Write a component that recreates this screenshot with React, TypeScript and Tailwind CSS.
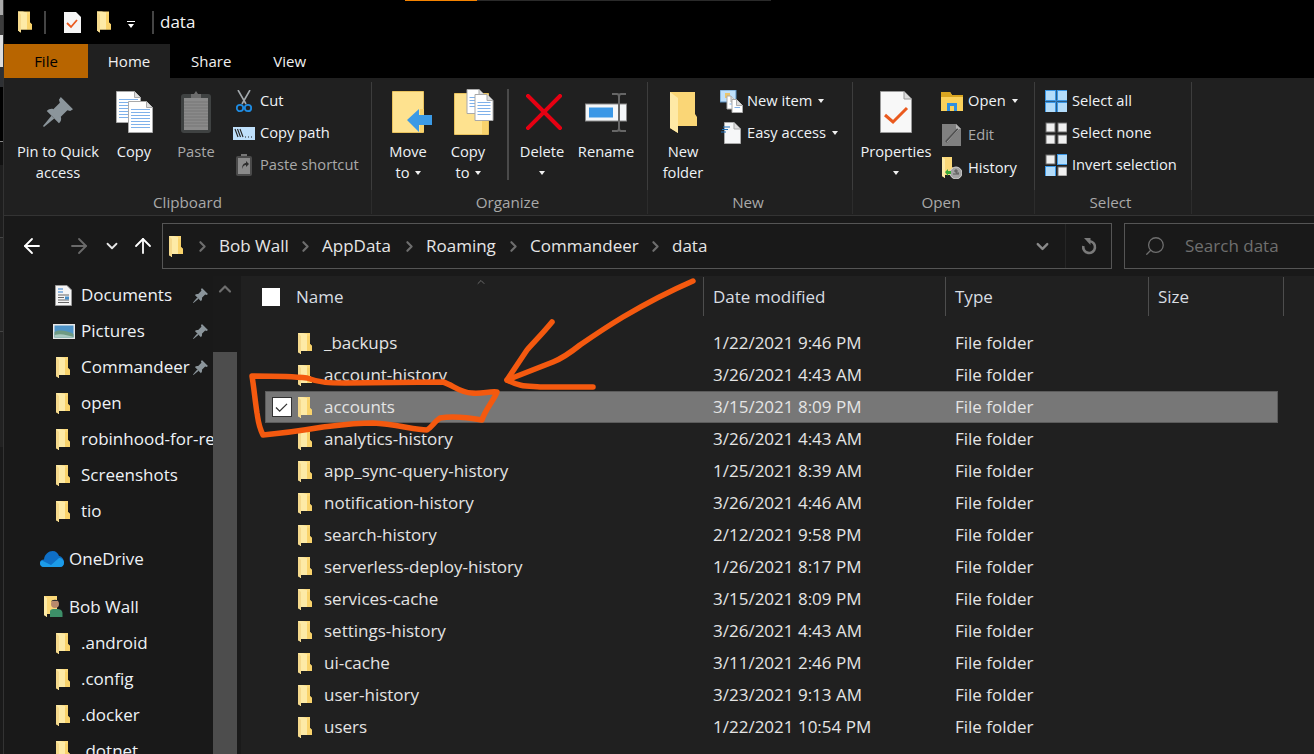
import React from 'react';
import { ArrowLeft, ArrowRight, ArrowUp, ChevronDown, ChevronRight, ChevronUp, Search } from 'lucide-react';

const FILES = [
  ['_backups', '1/22/2021 9:46 PM'],
  ['account-history', '3/26/2021 4:43 AM'],
  ['accounts', '3/15/2021 8:09 PM'],
  ['analytics-history', '3/26/2021 4:43 AM'],
  ['app_sync-query-history', '1/25/2021 8:39 AM'],
  ['notification-history', '3/26/2021 4:46 AM'],
  ['search-history', '2/12/2021 9:58 PM'],
  ['serverless-deploy-history', '1/26/2021 8:17 PM'],
  ['services-cache', '3/15/2021 8:09 PM'],
  ['settings-history', '3/26/2021 4:43 AM'],
  ['ui-cache', '3/11/2021 2:46 PM'],
  ['user-history', '3/23/2021 9:13 AM'],
  ['users', '1/22/2021 10:54 PM'],
];

const Folder = ({ className = 'w-[14px] h-[21px]' }: { className?: string }) => (
  <svg viewBox="0 0 14 21" className={`${className} shrink-0`}>
    <path d="M0 0H12V11L14 13V18H3V21L0 19Z" fill="#fbd878" />
    <path d="M0 0H4.5L9 1V18H3V21L0 19Z" fill="#fdeaa6" />
    <path d="M3 3V21L0 19V0Z" fill="#f5d98c" />
    <path d="M9 3H12V11L14 13V18H9Z" fill="#f9d36b" />
  </svg>
);

const Pin = ({ className = 'w-[15px] h-[15px]' }: { className?: string }) => (
  <svg viewBox="0 0 32 32" className={className} fill="#8b959b">
    <path d="M19 0L32 13L29 15L26 14L19 21C20 24 19 26 17 28L4 15C6 13 9 12 11 13L18 6L17 3Z" />
    <path d="M9 20L12 23L1 32L0 31Z" />
  </svg>
);

const DocLines = ({ x, y, w, h }: { x: number; y: number; w: number; h: number }) => (
  <g>
    <path d={`M${x} ${y}H${x + w - 6}L${x + w} ${y + 6}V${y + h}H${x}Z`} fill="#fff" stroke="#a9a9a9" />
    <path d={`M${x + w - 6} ${y}V${y + 6}H${x + w}`} fill="#ddd" stroke="#a9a9a9" />
    {Array.from({ length: Math.floor((h - 10) / 3) }).map((_, i) => (
      <path key={i} d={`M${x + 2.5} ${y + 8 + i * 3}H${x + w - 2.5}`} stroke="#7fb1ea" />
    ))}
  </g>
);

const CopyIcon = () => (
  <svg viewBox="0 0 37 42" className="w-[37px] h-[42px]">
    <DocLines x={0.5} y={0.5} w={24} h={31} />
    <DocLines x={12.5} y={10.5} w={24} h={31} />
  </svg>
);

const PasteIcon = () => (
  <svg viewBox="0 0 30 42" className="w-[30px] h-[42px]">
    <rect x="0" y="3" width="30" height="39" rx="3" fill="#3f4242" />
    <rect x="3" y="7" width="24" height="32" fill="#8a8a8a" />
    {[11, 14, 17, 20, 23, 26, 29, 32, 35].map(y => <path key={y} d={`M3 ${y}H27`} stroke="#777" />)}
    <path d="M10 7V3H13L15 0L17 3H20V7Z" fill="#6c6c6c" />
  </svg>
);

const CutIcon = () => (
  <svg viewBox="0 0 16 23" className="w-[16px] h-[23px]" fill="none">
    <path d="M2 0L10 14M14 0L6 14" stroke="#a3a9ad" strokeWidth="1.6" />
    <circle cx="4" cy="18" r="3.2" stroke="#1f8be0" strokeWidth="1.8" />
    <circle cx="12" cy="18" r="3.2" stroke="#1f8be0" strokeWidth="1.8" />
  </svg>
);

const CopyPathIcon = () => (
  <svg viewBox="0 0 22 13" className="w-[22px] h-[13px]">
    <rect width="22" height="13" fill="#bfe0fb" />
    <path d="M2 2L5 10M4.5 2L7.5 10M7 2L10 10" stroke="#222" strokeWidth="1.1" />
    <path d="M12 10h1M15 10h1M18 10h1" stroke="#222" strokeWidth="1.2" />
  </svg>
);

const PasteShortcutIcon = () => (
  <svg viewBox="0 0 16 22" className="w-[16px] h-[22px]">
    <rect y="2" width="16" height="20" rx="2" fill="#4a4a4a" />
    <rect x="2" y="4" width="12" height="16" fill="#8a8a8a" />
    <path d="M5 2V0H11V2Z" fill="#777" />
    <path d="M6 15C6 11 8 9 10 9V7L13 10L10 13V11C8 11 7 12 6 15Z" fill="#2d2d2d" />
  </svg>
);

const MoveIcon = () => (
  <svg viewBox="0 0 40 42" className="w-[40px] h-[42px] ml-[7px]">
    <path d="M0.5 0.5H31.5V41.5H0.5Z" fill="#fee28f" stroke="#e8c25e" />
    <path d="M28 18H32V41H28Z" fill="#f8d26c" />
    <path d="M15 32L27 21V27H40V37H27V44Z" fill="#3b9ae6" transform="translate(0 -3)" />
  </svg>
);

const CopyToIcon = () => (
  <svg viewBox="0 0 40 46" className="w-[40px] h-[46px] ml-[12px]">
    <path d="M0.5 4.5H34.5V45.5H0.5Z" fill="#fee28f" stroke="#e8c25e" />
    <path d="M28 30H34V45H28Z" fill="#f8d26c" />
    <DocLines x={13} y={0.5} w={18} h={24} />
    <DocLines x={21} y={5.5} w={18} h={26} />
  </svg>
);

const DeleteIcon = () => (
  <svg viewBox="0 0 36 36" className="w-[36px] h-[36px] ml-[3px]">
    <path d="M2 2L34 34M34 2L2 34" stroke="#e60012" strokeWidth="4" strokeLinecap="square" />
  </svg>
);

const RenameIcon = () => (
  <svg viewBox="0 0 42 39" className="w-[42px] h-[39px]">
    <rect x="0.5" y="11" width="41" height="17" fill="#f4f6f8" stroke="#8a8a8a" />
    <rect x="4" y="14.5" width="24" height="10" fill="#3a97e6" />
    <path d="M33 1H28M33 1C34.5 1 35 2 35 4V35C35 37 34.5 38 33 38H28M37 1H42M37 1C35.5 1 35 2 35 4M37 38C35.5 38 35 37 35 35M37 38H42" stroke="#666" strokeWidth="2" fill="none" transform="translate(-1 0)" />
  </svg>
);

const NewFolderIcon = () => (
  <svg viewBox="0 0 27 41" className="w-[27px] h-[41px]">
    <path d="M0 0H25V22L27 25V34H8V41L0 36Z" fill="#fad676" />
    <path d="M0 0L8 6V41L0 36Z" fill="#fee9a6" />
  </svg>
);

const NewItemIcon = () => (
  <svg viewBox="0 0 23 23" className="w-[23px] h-[23px]">
    <rect width="16" height="12" fill="#bfe0fb" stroke="#5a8fc0" />
    <path d="M5 3h5v5h-5z" fill="#e9c56e" />
    <DocLines x={7} y={6} w={10} h={13} />
    <DocLines x={12} y={9.5} w={10.5} h={13} />
  </svg>
);

const EasyAccessIcon = () => (
  <svg viewBox="0 0 20 22" className="w-[20px] h-[22px]">
    <path d="M3.5 0.5H13L19.5 7V21.5H3.5Z" fill="#f6f7f8" stroke="#a9a9a9" />
    <path d="M13 0.5V7H19.5" fill="#ddd" stroke="#a9a9a9" />
    <path d="M2 5h7M1 7.5h6M0 10h5" stroke="#1e6fb8" strokeWidth="1.2" />
  </svg>
);

const PropertiesIcon = () => (
  <svg viewBox="0 0 32 42" className="w-[32px] h-[42px]">
    <path d="M0.5 0.5H24L31.5 8V41.5H0.5Z" fill="#f8f8f8" stroke="#9a9a9a" />
    <path d="M24 0.5V8H31.5" fill="#ddd" stroke="#9a9a9a" />
    <path d="M5 24L13 31L27 17" fill="none" stroke="#ea5a1e" strokeWidth="3" />
  </svg>
);

const OpenIcon = () => (
  <svg viewBox="0 0 22 19" className="w-[22px] h-[19px]">
    <path d="M0 0H9L11 3H22V19H0Z" fill="#fbd15b" />
    <path d="M0 0H9L11 3H22V5H0Z" fill="#d9a521" />
    <path d="M6 19V11H16V19H13V14H9V19Z" fill="#2f8fe0" />
  </svg>
);

const EditIcon = () => (
  <svg viewBox="0 0 20 22" className="w-[20px] h-[22px]">
    <path d="M0 0H14L19 5V22H0Z" fill="#808080" />
    <path d="M14 0V5H19Z" fill="#b5b5b5" />
    <path d="M4 18L16 5" stroke="#4f4f4f" strokeWidth="2.4" />
    <path d="M5 18L17 5" stroke="#b0b0b0" strokeWidth="0.8" />
  </svg>
);

const HistoryIcon = () => (
  <svg viewBox="0 0 20 22" className="w-[20px] h-[22px]">
    <path d="M0 0H10V10L13 12V18H3V21L0 19Z" fill="#fbd878" />
    <path d="M0 0L3 2V21L0 19Z" fill="#fdeaa6" />
    <circle cx="14" cy="16" r="6" fill="#a3a3a3" stroke="#d5d5d5" />
    <path d="M14 12V16H17M12 14h4M11 17h6" stroke="#444" strokeWidth="0.8" fill="none" />
    <path d="M3 15L6 12V14H9V17H6V19Z" fill="#3aa93a" />
  </svg>
);

const GridIcon = ({ cells }: { cells: ('b' | 'w')[] }) => (
  <svg viewBox="0 0 22 22" className="w-[22px] h-[22px]">
    {cells.map((c, i) => {
      const x = i % 2 === 0 ? 0 : 12;
      const y = i < 2 ? 0 : 12;
      return c === 'b' ? (
        <rect key={i} x={x + 0.5} y={y + 0.5} width="10" height="10" fill="#b3dcfa" stroke="#3a97e6" />
      ) : (
        <rect key={i} x={x + 1} y={y + 1} width="9" height="9" fill="#f0f0f0" stroke="#6e6e6e" />
      );
    })}
    {cells.every(c => c === 'b') && <path d="M10.5 0H11.5V22H10.5ZM0 10.5H22V11.5H0Z" fill="#3a97e6" />}
  </svg>
);

const RefreshIcon = () => (
  <svg viewBox="0 0 16 17" className="w-[16px] h-[17px]" fill="none">
    <path d="M9 3.2A5.9 5.9 0 1 1 2.3 8" stroke="#7a7a7a" strokeWidth="2.6" />
    <path d="M3 0H9.500V7Z" fill="#7a7a7a" />
  </svg>
);

const Caret = ({ className = '' }: { className?: string }) => (
  <span className={`inline-block w-0 h-0 border-x-[3.5px] border-x-transparent border-t-[4px] border-t-[#f0f0f0] align-middle ${className}`} />
);

const Large = ({ w, icon, lines, caret, dim }: { w: string; icon: React.ReactNode; lines: string[]; caret?: boolean; dim?: boolean }) => (
  <div className={`${w} flex flex-col items-center shrink-0 leading-[21px] ${dim ? 'text-[#a9a9a9]' : 'text-[#eef2f6]'}`}>
    <div className="h-[60px] -mb-[1px] flex items-center justify-center">{icon}</div>
    <div className="whitespace-nowrap">{lines[0]}</div>
    <div className="h-[21px] flex items-center justify-center gap-[5px] whitespace-nowrap">
      {lines[1]}
      {caret && <Caret />}
    </div>
  </div>
);

const Small = ({ icon, label, caret, dim, h = 'h-[32px]' }: { icon: React.ReactNode; label: string; caret?: boolean; dim?: boolean; h?: string }) => (
  <div className={`${h} flex items-center whitespace-nowrap ${dim ? 'text-[#a9a9a9]' : 'text-[#eef2f6]'}`}>
    <div className="w-[24px] mr-[4px] flex justify-center">{icon}</div>
    <span className="-mt-[2px]">{label}</span>
    {caret && <Caret className="ml-[6px]" />}
  </div>
);

const Group = ({ w, label, labelPad = '', className = '', children }: { w: string; label: string; labelPad?: string; className?: string; children: React.ReactNode }) => (
  <div className={`${w} shrink-0 flex flex-col`}>
    <div className={`mt-[4px] h-[108px] flex border-r border-[#3d3d3d] ${className}`}>{children}</div>
    <div className={`h-[24px] flex items-center justify-center border-r border-[#2c2c2c] text-[#a9a9a9] text-[15.2px] ${labelPad}`}>{label}</div>
  </div>
);

const Crumb = ({ label, w }: { label: string; w: string }) => (
  <div className={`${w} shrink-0 flex items-center text-[#e6e6e6]`}>
    <ChevronRight className="w-[17px] h-[17px] text-[#6e6e6e] mr-[8px] shrink-0" strokeWidth={3} />
    {label}
  </div>
);

const NavRow = ({ icon, label, indent = 'pl-[52px]', iconW = 'w-[25px]', pinned, className = '' }: { icon?: React.ReactNode; label: string; indent?: string; iconW?: string; pinned?: boolean; className?: string }) => (
  <div className={`h-[36px] flex items-center shrink-0 relative overflow-hidden whitespace-nowrap text-[#eef2f6] ${indent} ${className}`}>
    <div className={`${iconW} shrink-0 flex`}>{icon ?? <Folder />}</div>
    <span>{label}</span>
    {pinned && (
      <div className="absolute right-0 top-0 h-full w-[20px] flex items-center">
        <Pin />
      </div>
    )}
  </div>
);

const Cloud = () => (
  <svg viewBox="0 0 24 16" className="w-[24px] h-[16px]">
    <path d="M4 16C1 16 0 14 0 12C0 10 1.5 8.5 4 8.5C4.5 3 9 0 12.5 0C16 0 18 2 19 5C22 5.5 24 8.5 24 11.5C24 14.5 22 16 20 16Z" fill="#0f6fc6" />
    <path d="M4 16C1 16 0 14 0 12C0 11 1 10 2 9.5L11 14L19 7C21.5 7 24 9 24 11.5C24 14.5 22 16 20 16Z" fill="#1c9be8" />
  </svg>
);

const UserFolder = () => (
  <svg viewBox="0 0 19 22" className="w-[19px] h-[22px]">
    <path d="M0 0H13V18H3V21L0 19Z" fill="#fbd878" />
    <path d="M0 0L3 2V21L0 19Z" fill="#fdeaa6" />
    <circle cx="11" cy="8" r="4" fill="#b88a6c" />
    <path d="M7 6C7 3 15 3 15 6L14 5H8Z" fill="#333" />
    <path d="M6 21V16C6 13 8 13 11 13C15 13 18 13 18.5 17V21Z" fill="#3d8f68" />
  </svg>
);

const Annotation = () => (
  <svg className="absolute left-0 top-0 w-[1314px] h-[754px] pointer-events-none" viewBox="0 0 1314 754" fill="none" stroke="#f4590f" strokeWidth="5.5" strokeLinecap="round" strokeLinejoin="round">
    <path d="M693 281C670 291 645 304 623 317C608 326 596 334 580 345C570 353 563 358 553 362L507 380" />
    <path d="M552 322C543 333 535 341 527 350L507 380C520 387 527 386 540 387L593 387" />
    <path d="M252 376C270 376 290 376 307 378C320 383 330 383 345 383L443 382C453 385 460 393 472 393C482 394 490 391 497 392C494 400 485 410 482 420C465 417 452 416 440 418C434 422 432 427 427 430C415 430 395 424 373 423C355 423 340 425 323 427C305 430 285 433 263 435C258 425 258 418 257 413C255 400 254 388 252 376Z" />
  </svg>
);

const App = () => (
  <div className="w-[1314px] h-[754px] overflow-hidden relative flex bg-[#191919] text-[17px] leading-[22px] font-['Open_Sans',sans-serif]">
    {/* bit of the window behind */}
    <div className="w-[4px] shrink-0 flex flex-col border-r border-[#333]">
      <div className="h-[15px] bg-[#aaaaaa]" />
      <div className="h-[20px] bg-[#3c3c3c]" />
      <div className="h-[32px] bg-[#dddddd]" />
      <div className="h-[20px] bg-[#2e3033]" />
      <div className="h-[55px] bg-black border-b border-[#888]" />
      <div className="h-[23px] bg-[#111]" />
      <div className="h-[73px] bg-[#1e1e1e] border-b border-[#444]" />
      <div className="h-[94px] bg-[#262626] border-b border-[#444]" />
      <div className="h-[115px] bg-[#222]" />
      <div className="flex-1 bg-[#1a1a1a]" />
    </div>

    <div className="flex-1 min-w-0 flex flex-col">
      {/* title bar */}
      <div className="h-[44px] shrink-0 bg-black relative flex items-center text-white">
        <div className="absolute left-[401px] top-0 h-[1px] w-[72px] bg-[#f58300]" />
        <div className="absolute left-[473px] top-0 h-[1px] w-[294px] bg-[#2a2a2a]" />
        <div className="ml-[14px]"><Folder className="w-[14px] h-[22px]" /></div>
        <div className="ml-[12px] w-[2px] h-[23px] bg-[#444]" />
        <div className="ml-[18px]">
          <svg viewBox="0 0 17 21" className="w-[17px] h-[21px]">
            <path d="M0 0H12L17 5V21H0Z" fill="#f5f5f5" />
            <path d="M3 11L7 15L13 8" fill="none" stroke="#ea5a1e" strokeWidth="1.8" />
          </svg>
        </div>
        <div className="ml-[16px]"><Folder className="w-[14px] h-[22px]" /></div>
        <div className="ml-[16px] flex flex-col items-center gap-[2px] mt-[5px]">
          <div className="w-[8px] h-[1px] bg-white" />
          <Caret className="!border-t-white" />
        </div>
        <div className="ml-[17px] w-[2px] h-[23px] bg-[#444]" />
        <div className="ml-[6px] text-[#f4f4f4]">data</div>
      </div>

      {/* tabs */}
      <div className="h-[34px] shrink-0 bg-black flex items-center text-[#f0f0f0] text-[15px]">
        <div className="w-[84px] h-full bg-[#b86500] text-black flex items-center justify-center">File</div>
        <div className="w-[82px] h-full bg-[#202020] flex items-center justify-center">Home</div>
        <div className="ml-[21px]">Share</div>
        <div className="ml-[42px]">View</div>
      </div>

      {/* ribbon */}
      <div className="h-[138px] shrink-0 bg-[#202020] flex border-b border-[#333] text-[14.7px]">
        <Group w="w-[368px]" label="Clipboard" className="pl-[8px]">
          <Large w="w-[92px]" icon={<Pin className="w-[30px] h-[30px]" />} lines={['Pin to Quick', 'access']} />
          <Large w="w-[60px]" icon={<CopyIcon />} lines={['Copy']} />
          <Large w="w-[64px]" icon={<PasteIcon />} lines={['Paste']} dim />
          <div className="ml-[4px] pt-[3px]">
            <Small icon={<CutIcon />} label="Cut" />
            <Small icon={<CopyPathIcon />} label="Copy path" />
            <Small icon={<PasteShortcutIcon />} label="Paste shortcut" dim />
          </div>
        </Group>
        <Group w="w-[276px]" label="Organize" labelPad="pr-[4px]" className="pl-[6px]">
          <Large w="w-[60px]" icon={<MoveIcon />} lines={['Move', 'to']} caret />
          <Large w="w-[60px]" icon={<CopyToIcon />} lines={['Copy', 'to']} caret />
          <div className="ml-[9px] mr-[3px] mt-[7px] w-[2px] h-[91px] bg-[#4a4a4a]" />
          <Large w="w-[60px]" icon={<DeleteIcon />} lines={['Delete', '']} caret />
          <Large w="w-[68px]" icon={<RenameIcon />} lines={['Rename']} />
        </Group>
        <Group w="w-[205px]" label="New" labelPad="pr-[4px]" className="pl-[5px]">
          <Large w="w-[60px]" icon={<NewFolderIcon />} lines={['New', 'folder']} />
          <div className="ml-[6px] pt-[3px]">
            <Small icon={<NewItemIcon />} label="New item" caret />
            <Small icon={<EasyAccessIcon />} label="Easy access" caret />
          </div>
        </Group>
        <Group w="w-[182px]" label="Open" labelPad="pr-[5px]" className="pl-[5px]">
          <Large w="w-[76px]" icon={<PropertiesIcon />} lines={['Properties', '']} caret />
          <div className="ml-[6px] pt-[3px]">
            <Small icon={<OpenIcon />} label="Open" caret />
            <Small h="h-[36px]" icon={<EditIcon />} label="Edit" dim />
            <Small h="h-[30px]" icon={<HistoryIcon />} label="History" />
          </div>
        </Group>
        <Group w="w-[157px]" label="Select" labelPad="pr-[5px]" className="pl-[9px]">
          <div className="pt-[3px]">
            <Small icon={<GridIcon cells={['b', 'b', 'b', 'b']} />} label="Select all" />
            <Small icon={<GridIcon cells={['w', 'w', 'w', 'w']} />} label="Select none" />
            <Small icon={<GridIcon cells={['w', 'b', 'b', 'w']} />} label="Invert selection" />
          </div>
        </Group>
      </div>

      {/* address row */}
      <div className="h-[60px] shrink-0 flex items-center bg-[#191919]">
        <ArrowLeft className="w-[24px] h-[24px] ml-[16px] text-white" strokeWidth={1.8} />
        <ArrowRight className="w-[24px] h-[24px] ml-[23px] text-[#6a6a6a]" strokeWidth={1.8} />
        <ChevronDown className="w-[18px] h-[18px] ml-[12px] text-[#e6e6e6]" strokeWidth={2.4} />
        <ArrowUp className="w-[24px] h-[24px] ml-[10px] text-white" strokeWidth={1.8} />
        <div className="ml-[7px] w-[950px] h-[46px] border border-[#555] flex items-center pl-[6px]">
          <Folder className="w-[14px] h-[21px]" />
          <span className="w-[11px]" />
          <Crumb w="w-[103px]" label="Bob Wall" />
          <Crumb w="w-[104px]" label="AppData" />
          <Crumb w="w-[104px]" label="Roaming" />
          <Crumb w="w-[142px]" label="Commandeer" />
          <Crumb w="w-[60px]" label="data" />
          <div className="ml-auto flex items-center h-full">
            <ChevronDown className="w-[19px] h-[19px] mr-[13px] text-[#8a8a8a]" strokeWidth={3} />
            <div className="w-[46px] h-full border-l border-[#262626] flex items-center justify-center">
              <RefreshIcon />
            </div>
          </div>
        </div>
        <div className="ml-[12px] flex-1 h-[46px] border border-r-0 border-[#555] flex items-center text-[#6f6f6f]">
          <Search className="w-[22px] h-[22px] ml-[19px] -scale-x-100 text-[#6f6f6f]" strokeWidth={1.4} />
          <span className="ml-[19px]">Search data</span>
        </div>
      </div>

      {/* body */}
      <div className="flex-1 min-h-0 flex">
        <div className="w-[209px] shrink-0 overflow-hidden pt-[1px] flex flex-col">
          <NavRow icon={<svg viewBox="0 0 17 21" className="w-[17px] h-[21px] -ml-[1px]"><path d="M0.5 0.5H12L16.5 5V20.5H0.5Z" fill="#f5f5f5" stroke="#999" /><path d="M3 4h5M3 7h5" stroke="#2f7fd0" /><path d="M3 10h11M3 12.5h6M3 15h11M3 17.5h11" stroke="#666" /><rect x="10" y="11.5" width="4" height="3" fill="#4a90c8" /></svg>} label="Documents" pinned />
          <NavRow icon={<svg viewBox="0 0 22 15" className="w-[22px] h-[15px] -ml-[3px]"><rect width="22" height="15" fill="#e8e8e8" /><rect x="1.5" y="1.5" width="19" height="12" fill="#4f94c8" /><path d="M1.5 8C7 5 14 7 20.5 10V13.5H1.5Z" fill="#6f9a83" /><path d="M1.5 11C8 9 14 11 20.5 13V13.5H1.5Z" fill="#a8c8c0" /></svg>} label="Pictures" pinned />
          <NavRow label="Commandeer" pinned />
          <NavRow label="open" />
          <NavRow label="robinhood-for-reddit" />
          <NavRow label="Screenshots" />
          <NavRow label="tio" />
          <NavRow icon={<Cloud />} indent="pl-[36px]" iconW="w-[29px]" label="OneDrive" className="mt-[12px]" />
          <NavRow icon={<UserFolder />} indent="pl-[40px]" label="Bob Wall" className="mt-[12px]" />
          <NavRow label=".android" />
          <NavRow label=".config" />
          <NavRow label=".docker" />
          <NavRow label=".dotnet" />
        </div>

        <div className="w-[24px] shrink-0 flex flex-col bg-[#1a1a1a]">
          <div className="h-[76px] pt-[3px] flex justify-center text-[#6e6e6e]">
            <ChevronUp className="w-[20px] h-[20px]" strokeWidth={2.6} />
          </div>
          <div className="flex-1 bg-[#4d4d4d]" />
        </div>
        <div className="w-[4px] shrink-0 bg-[#1a1a1a]" />

        <div className="flex-1 min-w-0 bg-[#202020] relative">
          <ChevronUp className="absolute left-[232px] top-0 w-[16px] h-[12px] text-[#8a8a8a]" strokeWidth={1.4} />
          {/* header */}
          <div className="h-[40px] pt-[1px] flex text-[#d8dde2] relative">
            <div className="w-[463px] flex items-center shrink-0 pl-[21px] border-r border-[#4d4d4d]">
              <div className="w-[18px] h-[18px] bg-white" />
              <span className="ml-[16px]">Name</span>
            </div>
            <div className="w-[242px] flex items-center shrink-0 pl-[9px] border-r border-[#4d4d4d]">Date modified</div>
            <div className="w-[203px] flex items-center shrink-0 pl-[9px] border-r border-[#4d4d4d]">Type</div>
            <div className="w-[135px] flex items-center shrink-0 pl-[9px] border-r border-[#4d4d4d]">Size</div>
          </div>
          {/* rows */}
          <div className="pt-[11px] w-[1013px] ml-[24px]">
            {FILES.map(([name, date], i) => (
              <div key={name} className={`h-[32px] flex items-center text-[#e4e4e4] border ${i === 2 ? 'bg-[#777777] border-[#5c5c5c]' : 'border-transparent'}`}>
                <div className="w-[32px] shrink-0 flex justify-center pr-[1px]">
                  {i === 2 && (
                    <div className="w-[20px] h-[20px] bg-white border border-[#333] flex items-center justify-center">
                      <svg viewBox="0 0 14 12" className="w-[13px] h-[11px]"><path d="M1 6L5 10L13 2" fill="none" stroke="#333" strokeWidth="1.4" /></svg>
                    </div>
                  )}
                </div>
                <Folder />
                <span className="ml-[12px] w-[389px] shrink-0">{name}</span>
                <span className="w-[242px] shrink-0">{date}</span>
                <span>File folder</span>
              </div>
            ))}
          </div>
        </div>
      </div>
    </div>

    <Annotation />
  </div>
);

export default App;
